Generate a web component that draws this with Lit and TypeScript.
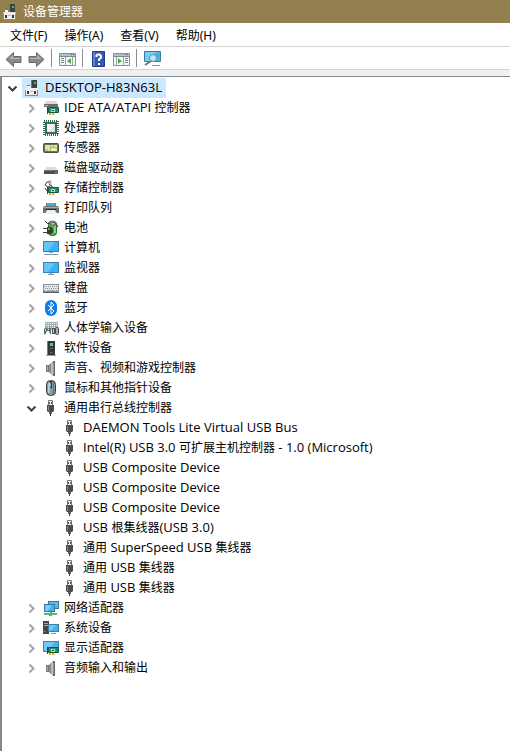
import { LitElement, html, svg, css, nothing } from "lit";
import type { TemplateResult } from "lit";
import { customElement, property, state } from "lit/decorators.js";
import { classMap } from "lit/directives/class-map.js";

const card = svg`
  <path d="M5.500 6.500h10v5h-10z" fill="#2f8f68" stroke="#155a46"/>
  <path d="M8 8h4v3H8z" fill="#a9dcc0"/><path d="M9 9h2v1H9z" fill="#17604a"/>
  <path d="M4 6h1v7H4zM13 8h1v1h-1z" fill="#1c4f40"/>
  <path d="M6 12h2v2H6zM9 12h2v2H9z" fill="#e6a326"/>`;

const plug = svg`
  <path d="M5.500 .500h4v5h-4z" fill="#f4f4f4" stroke="#777"/>
  <path d="M6 2h1v2H6zM8 2h1v2H8z" fill="#555"/>
  <path d="M4 5h7v6l-1 1H5l-1-1z" fill="#4b4b4b"/><path d="M5 6h1v5H5z" fill="#858585"/>
  <path d="M6 12h3v2H6z" fill="#666"/><path d="M7 13h1v3H7z" fill="#333"/>`;

const speaker = svg`
  <path d="M3 5h3v7H3z" fill="#777"/><path d="M4 6h1v5H4z" fill="#aaa"/>
  <path d="M6 5l4-4v15l-4-4z" fill="#b9b9b9"/><path d="M6 5l2-2v11l-2-2z" fill="#8c8c8c"/>
  <path d="M10 1h2v15h-2z" fill="#666"/><path d="M10 3h1v11h-1z" fill="#999"/>`;

const deviceBox = svg`
  <path d="M7 0h6v8H7z" fill="#3c4346"/><path d="M10 2h2v2h-2z" fill="#56b06c"/><path d="M7 0h1v8H7z" fill="#777"/>
  <path d="M3 6h3v3H3z" fill="#f4f4f4"/><path d="M3 5h3v1H3z" fill="#777"/>
  <path d="M2 8h11l1 2v6H1v-6z" fill="#f0efed"/><path d="M1 15h13v1H1zM1 10h1v5H1zM13 10h1v5h-1z" fill="#8b8b8b"/>
  <path d="M3 11h2v3H3zM10 11h2v3h-2z" fill="#34383c"/><path d="M6 11h3v1H6z" fill="#bbb"/>`;

const icons: Record<string, TemplateResult> = {
  root: deviceBox,
  plug,
  speaker,
  ide: svg`<path d="M3 1h10l2 3H1z" fill="#d9d9d9"/><path d="M1 4h14v3H1z" fill="#6c7072"/><path d="M2 5h3v1H2z" fill="#aaa"/>
    <g transform="translate(0 1)">${card}</g>`,
  cpu: svg`<path d="M2 2h12v12H2z" fill="#35704f"/><rect x="1" y="1" width="14" height="14" fill="none" stroke="#2f6b4b" stroke-width="2" stroke-dasharray="1 1"/>
    <path d="M4 4h8v8H4z" fill="#d5ded8"/><path d="M4 4h7v7H4z" fill="#f8f9f7"/><path d="M6 11l5-5v5z" fill="#e2e6e2"/>`,
  sensor: svg`<rect x=".5" y="3.500" width="15" height="9" rx="1" fill="#6d7262" stroke="#4e5146"/>
    <path d="M2 5h12v6H2z" fill="#e4e79f"/><path d="M7 5h1v6H7zM8 7h6v1H8z" fill="#b5bb75"/>
    <path d="M10 5h1v3h-1z" fill="#e7a24a"/><path d="M2 9h3v2H2z" fill="#a9cf85"/><path d="M9 9h4v2H9z" fill="#f3efb0"/>`,
  disk: svg`<path d="M4 7h8l3 3H1z" fill="#dcdcdc"/><path d="M1 10h14v4H1z" fill="#4b4e50"/><path d="M1 10h14v1H1z" fill="#777"/><path d="M12 12h2v1h-2z" fill="#75c58d"/>`,
  storage: svg`<path d="M8 1L4 2 2 5l3 2 4-2M2 8l2 3 4-1M6 4l5 4" fill="none" stroke="#3c3f40"/><path d="M4 2l3-1 2 2-3 1z" fill="#aaa"/>
    <g transform="translate(0 1)">${card}</g>`,
  printer: svg`<path d="M4 3h8v4H4z" fill="#4ba9da"/><path d="M3 3h1v4H3zM12 3h1v4h-1z" fill="#777"/><path d="M1 6h14l1 2v5H0V8z" fill="#6b7276"/>
    <path d="M1 7h14v1H1z" fill="#a6adb0"/><path d="M3 9h10v1H3z" fill="#202427"/><path d="M4 10h8l2 4H2z" fill="#eef3f5"/><path d="M5 7h6v1H5z" fill="#68c6e8"/>`,
  battery: svg`<rect x="5.500" y="1.500" width="8" height="14" rx="3" fill="#43ae44" stroke="#286e31"/>
    <ellipse cx="9.500" cy="3" rx="3.500" ry="2" fill="#e2e6df" stroke="#666"/><path d="M11 6h2v7h-2z" fill="#84d174"/>
    <path d="M2 1q2 4 6 2t7 4" fill="none" stroke="#333"/><path d="M4 7h4l2 2v3l-2 2H4z" fill="#383a33"/>
    <path d="M0 8h4v1H0zM0 12h4v1H0z" fill="#444"/><path d="M5 8h2v2H5z" fill="#968f72"/>`,
  computer: svg`<rect x=".5" y="1.500" width="15" height="10" fill="#3eb0f5" stroke="#3983ac"/><path d="M1 2h11L5 11H1z" fill="#65c5fb"/>
    <path d="M6 12h4v1H6z" fill="#91afbe"/><path d="M1 14h14v1H1z" fill="#7897a7"/>`,
  monitor: svg`<rect x=".5" y="2.500" width="15" height="10" fill="#3eb0f5" stroke="#3983ac"/><path d="M1 3h11L5 12H1z" fill="#65c5fb"/>
    <path d="M7 13h2v1H7z" fill="#8aa"/><path d="M5 14h6v1H5z" fill="#6f99ad"/>`,
  keyboard: svg`<path d="M0 4h16v9H0z" fill="#8d9398"/><path d="M1 5h14v6H1z" fill="#e6e8e9"/>
    <path d="M1 6.500h14M2 8.500h13M1 10.500h2M13 10.500h2" stroke="#8f969b" stroke-dasharray="1 1"/><path d="M4 10h8v1H4z" fill="#a0a6aa"/><path d="M0 12h16v1H0z" fill="#565c61"/>`,
  bluetooth: svg`<rect x="2" y="0" width="12" height="16" rx="6" fill="#0b7fe5"/><path d="M5 5l6 6-3 3V2l3 3-6 6" fill="none" stroke="#fff"/>`,
  hid: svg`<path d="M2 2h13v8H2z" fill="#a9adb0"/><path d="M3 3.500h11M3 5.500h11M3 7.500h11" stroke="#f3f3f3" stroke-dasharray="1 1"/>
    <path d="M1 14V9l2-2 2 2 2-2 1 2v5H7l-1-3H4l-2 4z" fill="#557078"/><path d="M2 9h1v2H2zM5 9h1v1H5z" fill="#c1d3d6"/>
    <rect x="9.500" y="8.500" width="2" height="5" fill="#ccc" stroke="#4d5355"/><rect x="12.500" y="7.500" width="3" height="7" rx="1" fill="#a9adb0" stroke="#44494b"/>`,
  software: svg`<path d="M4 1h8v14H4z" fill="#30383a"/><path d="M4 1h1v14H4z" fill="#777e7c"/><path d="M7 3h3v3H7z" fill="#56cb72"/><path d="M7 8h3v1H7zM7 12h3v1H7z" fill="#626a66"/><path d="M3 15h10v1H3z" fill="#999"/>`,
  mouse: svg`<rect x="3.500" y=".5" width="9" height="15" rx="4" fill="#8c969e" stroke="#34393d"/><path d="M5 3h2v10H5z" fill="#bdc7ce"/><path d="M10 3h1v10h-1z" fill="#626b72"/><path d="M7 1h2v7H7z" fill="#2f3941"/><path d="M7 3h1v4H7z" fill="#59b8ec"/>`,
  network: svg`<rect x="5.500" y="1.500" width="10" height="7" fill="#55b9ef" stroke="#357b9d"/><rect x="1.500" y="4.500" width="10" height="7" fill="#48aeea" stroke="#357b9d"/>
    <path d="M2 5h7l-4 6H2z" fill="#7acbf7"/><path d="M7 12h2v1h5v2H9v1H6v-1H1v-2h6z" fill="#55b978"/>`,
  system: svg`<path d="M0 1h6v13H0z" fill="#40474b"/><path d="M1 3h4v1H1zM1 5h4v1H1z" fill="#9ca5a9"/><path d="M1 11h1v1H1z" fill="#6fd583"/>
    <rect x="5.500" y="4.500" width="10" height="7" fill="#45b1f2" stroke="#3b7fa3"/><path d="M6 5h7l-5 6H6z" fill="#70c8fa"/><path d="M8 13h5v1H8z" fill="#789aaa"/>`,
  display: svg`<rect x=".5" y="1.500" width="15" height="10" fill="#45b1f2" stroke="#3983ac"/><path d="M1 2h11L5 11H1z" fill="#70c8fa"/><g transform="translate(0 1)">${card}</g>`,
};

const arrow = svg`<path d="M1 8.500L8.500 1.500v4h7.500v6H8.500v4z" fill="#8a8a8a" stroke="#6a6a6a" stroke-linejoin="round"/><path d="M4 8l4-4v3h7v1z" fill="#b4b4b4"/>`;
const panel = svg`<path d="M.5 2.500h16v12H.5z" fill="#f7f8f8" stroke="#87919a"/><path d="M1 3h15v2H1z" fill="#b4bfc8"/><path d="M12 3h1v1h-1zM14 3h1v1h-1z" fill="#59636b"/><path d="M1 5h15v1H1z" fill="#7c8790"/>`;

interface Device { name: string; icon: string; children?: Device[]; }

const usb = [
  "DAEMON Tools Lite Virtual USB Bus",
  "Intel(R) USB 3.0 可扩展主机控制器 - 1.0 (Microsoft)",
  "USB Composite Device", "USB Composite Device", "USB Composite Device",
  "USB 根集线器(USB 3.0)", "通用 SuperSpeed USB 集线器", "通用 USB 集线器", "通用 USB 集线器",
].map((name) => ({ name, icon: "plug" }));

const d = (name: string, icon: string, children: Device[] = []): Device => ({ name, icon, children });

const root: Device = d("DESKTOP-H83N63L", "root", [
  d("IDE ATA/ATAPI 控制器", "ide"), d("处理器", "cpu"), d("传感器", "sensor"), d("磁盘驱动器", "disk"),
  d("存储控制器", "storage"), d("打印队列", "printer"), d("电池", "battery"), d("计算机", "computer"),
  d("监视器", "monitor"), d("键盘", "keyboard"), d("蓝牙", "bluetooth"), d("人体学输入设备", "hid"),
  d("软件设备", "software"), d("声音、视频和游戏控制器", "speaker"), d("鼠标和其他指针设备", "mouse"),
  d("通用串行总线控制器", "plug", usb), d("网络适配器", "network"), d("系统设备", "system"),
  d("显示适配器", "display"), d("音频输入和输出", "speaker"),
]);

@customElement("device-node")
export class DeviceNode extends LitElement {
  @property({ attribute: false }) device!: Device;
  @property({ type: Boolean }) selected = false;
  @state() private open = true;

  static styles = css`
    :host { display: block; }
    .row { display: flex; height: 20px; }
    .toggle, .space { width: 16px; flex: none; }
    .toggle { display: grid; place-items: center; padding: 0; border: 0; background: none; color: #a6a6a6; }
    .toggle.open { color: #404040; }
    .label { display: flex; align-items: center; gap: 5px; margin-left: 2px; padding: 0 4px 0 2px; white-space: nowrap; }
    .label.selected { background: #cce8ff; }
    .icon { flex: none; display: block; }
    .name { line-height: 20px; white-space: pre; }
    .latin { font-family: "Open Sans", "Noto Sans", sans-serif; font-size: 13px; line-height: 16px; }
    .children { padding-left: 19px; }
  `;

  render() {
    const { name, icon, children } = this.device;
    const open = this.open && !!children?.length;
    return html`
      <div class="row" role="treeitem">
        ${children
          ? html`<button class=${classMap({ toggle: true, open })} aria-label=${name} aria-expanded=${open} @click=${() => (this.open = !this.open)}>
              <svg width="11" height="11" viewBox="0 0 11 11" fill="none" stroke="currentColor" stroke-width="2">
                <path d=${open ? "M1.500 3.500l4 4 4-4" : "M3.500 1.500l4 4-4 4"} />
              </svg>
            </button>`
          : html`<span class="space"></span>`}
        <span class=${classMap({ label: true, selected: this.selected })}>
          <svg class="icon" width="16" height="16" viewBox="0 0 16 16">${icons[icon]}</svg>
          <span class="name">${name.split(/([\x20-\x7e]+)/).map((run, i) => (i % 2 ? html`<span class="latin">${run}</span>` : run))}</span>
        </span>
      </div>
      ${open
        ? html`<div class="children" role="group">
            ${children!.map((c) => html`<device-node .device=${c}></device-node>`)}
          </div>`
        : nothing}
    `;
  }
}

@customElement("app-root")
export class AppRoot extends LitElement {
  static styles = css`
    :host {
      display: flex; flex-direction: column; min-height: 100vh; background: #f0f0f0; color: #000;
      font: 12px "Noto Sans", "Noto Sans CJK SC", sans-serif;
    }
    button { font: inherit; color: inherit; border: 0; background: none; padding: 0; }
    .title { display: flex; align-items: center; gap: 5px; height: 23px; padding-left: 2px; background: #94804f; color: #fff; }
    .title h1 { margin: 0; font-size: 12px; font-weight: 400; line-height: 20px; }
    .menu { display: flex; gap: 17px; height: 23px; padding-left: 10px; background: #fff; border-bottom: 1px solid #d4d4d4; }
    .tools { display: flex; align-items: center; height: 22px; padding-left: 2px; background: #fff; border-bottom: 1px solid #d4d4d4; }
    .tool { display: grid; place-items: end center; width: 23px; height: 20px; }
    .rule { width: 1px; height: 18px; margin: 0 4px 0 3px; background: #8c8c8c; }
    .tree { flex: 1; margin-top: 6px; padding: 1px 0 0 2px; background: #fff; border: solid #828790; border-width: 1px 0 0 2px; }
  `;

  private tool(label: string, body: TemplateResult) {
    return html`<button class="tool" aria-label=${label}><svg width="17" height="17" viewBox="0 0 17 17">${body}</svg></button>`;
  }

  render() {
    return html`
      <header class="title">
        <svg width="16" height="16" viewBox="0 0 16 16">${deviceBox}</svg>
        <h1>设备管理器</h1>
      </header>
      <nav class="menu">
        ${["文件(F)", "操作(A)", "查看(V)", "帮助(H)"].map((m) => html`<button>${m}</button>`)}
      </nav>
      <div class="tools" role="toolbar">
        ${this.tool("后退", arrow)}
        ${this.tool("前进", svg`<g transform="matrix(-1 0 0 1 17 0)">${arrow}</g>`)}
        <span class="rule"></span>
        ${this.tool("显示/隐藏控制台树", svg`${panel}<path d="M2 7h3v1H2zM2 9h3v1H2zM2 11h3v1H2z" fill="#688"/><path d="M6 6h1v8H6zM13 6h1v8h-1z" fill="#9aa4ac"/><path d="M12 7v6L8 10z" fill="#51ad43"/>`)}
        <span class="rule"></span>
        ${this.tool("帮助", svg`<path d="M2.500.5h12v15h-12z" fill="#3658b4" stroke="#263d86"/><path d="M3 1h2v14H3z" fill="#6381cf"/><path d="M6.500 6V4.500l1-1h2l1.500 1.500v1.500L9 8.500V10M9 12v2" fill="none" stroke="#fff" stroke-width="2"/>`)}
        ${this.tool("属性", svg`${panel}<path d="M12 7h3v1h-3zM12 9h3v1h-3zM12 11h3v1h-3z" fill="#688"/><path d="M10 6h1v8h-1zM3 6h1v8H3z" fill="#9aa4ac"/><path d="M5 7v6l4-3z" fill="#51ad43"/>`)}
        <span class="rule"></span>
        ${this.tool("扫描检测硬件改动", svg`<path d="M.5.5h16v10H.5z" fill="#49b3e6" stroke="#357e9f"/><path d="M1 1h11l-6 9H1z" fill="#78cdf2"/><path d="M8 14h8v1H8z" fill="#8197a3"/><path d="M7 10l-6 4" stroke="#777" stroke-width="2"/><circle cx="9" cy="7" r="3.500" fill="#bce7f8" stroke="#5e94ad"/>`)}
      </div>
      <main class="tree" role="tree">
        <device-node .device=${root} .selected=${true}></device-node>
      </main>
    `;
  }
}
